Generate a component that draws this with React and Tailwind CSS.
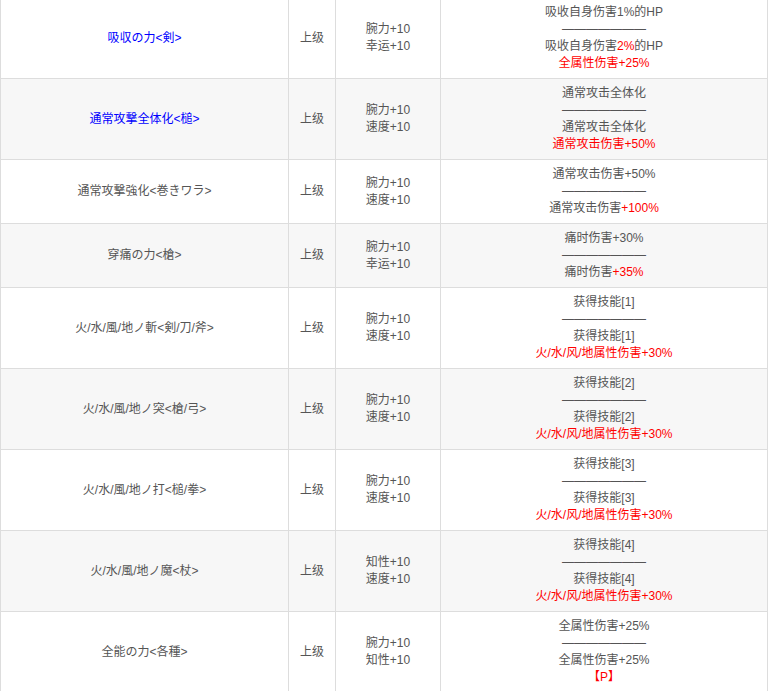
import React from 'react';

const R = ({ children }) => <span className="text-[#ff0000]">{children}</span>;
const SEP = '———————';

const rows = [
  { name: '吸収の力<剣>', blue: true, stats: ['腕力+10', '幸运+10'], eff: [<>吸收自身伤害1%的HP</>, SEP, <>吸收自身伤害<R>2%</R>的HP</>, <R>全属性伤害+25%</R>] },
  { name: '通常攻撃全体化<槌>', blue: true, stats: ['腕力+10', '速度+10'], eff: ['通常攻击全体化', SEP, '通常攻击全体化', <R>通常攻击伤害+50%</R>] },
  { name: '通常攻撃強化<巻きワラ>', stats: ['腕力+10', '速度+10'], eff: ['通常攻击伤害+50%', SEP, <>通常攻击伤害<R>+100%</R></>] },
  { name: '穿痛の力<槍>', stats: ['腕力+10', '幸运+10'], eff: ['痛时伤害+30%', SEP, <>痛时伤害<R>+35%</R></>] },
  { name: '火/水/風/地ノ斬<剣/刀/斧>', stats: ['腕力+10', '速度+10'], eff: ['获得技能[1]', SEP, '获得技能[1]', <R>火/水/风/地属性伤害+30%</R>] },
  { name: '火/水/風/地ノ突<槍/弓>', stats: ['腕力+10', '速度+10'], eff: ['获得技能[2]', SEP, '获得技能[2]', <R>火/水/风/地属性伤害+30%</R>] },
  { name: '火/水/風/地ノ打<槌/拳>', stats: ['腕力+10', '速度+10'], eff: ['获得技能[3]', SEP, '获得技能[3]', <R>火/水/风/地属性伤害+30%</R>] },
  { name: '火/水/風/地ノ魔<杖>', stats: ['知性+10', '速度+10'], eff: ['获得技能[4]', SEP, '获得技能[4]', <R>火/水/风/地属性伤害+30%</R>] },
  { name: '全能の力<各種>', stats: ['腕力+10', '知性+10'], eff: ['全属性伤害+25%', SEP, '全属性伤害+25%', <R>【P】</R>] },
];

export default function App() {
  return (
    <div className="w-[770px] h-[691px] overflow-hidden bg-white" style={{ fontFamily: '"Liberation Sans", "Noto Sans CJK SC", sans-serif' }}>
      <table className="-mt-[3px] w-[768px] border-collapse text-[12px] leading-[17px] text-[#555] text-center table-fixed">
        <colgroup>
          <col className="w-[288px]" />
          <col className="w-[47px]" />
          <col className="w-[105px]" />
          <col />
        </colgroup>
        <tbody>
          {rows.map((r, i) => (
            <tr key={i} className={i % 2 === 1 ? 'bg-[#f7f7f7]' : 'bg-white'}>
              <td className={`border border-[#dddddd] py-[6px] ${r.blue ? 'text-[#0000ff]' : ''}`}>{r.name}</td>
              <td className="border border-[#dddddd] py-[6px]">上级</td>
              <td className="border border-[#dddddd] py-[6px]">
                {r.stats.map((s, j) => <div key={j}>{s}</div>)}
              </td>
              <td className="border border-[#dddddd] py-[6px]">
                {r.eff.map((e, j) => <div key={j}>{e}</div>)}
              </td>
            </tr>
          ))}
        </tbody>
      </table>
    </div>
  );
}
